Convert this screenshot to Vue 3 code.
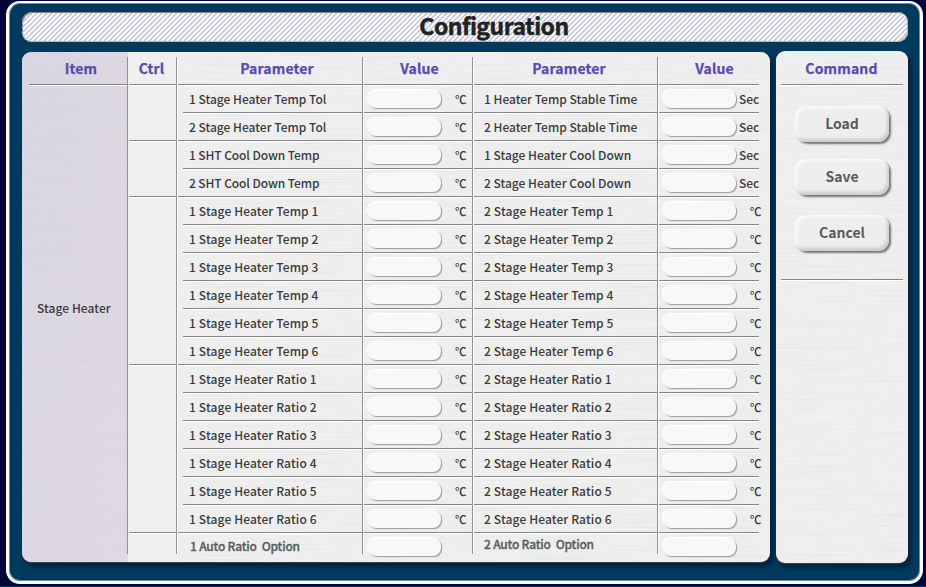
<script setup>
const leftNames = [
  '1 Stage Heater Temp Tol', '2 Stage Heater Temp Tol', '1 SHT Cool Down Temp', '2 SHT Cool Down Temp',
  ...[1, 2, 3, 4, 5, 6].map(n => `1 Stage Heater Temp ${n}`),
  ...[1, 2, 3, 4, 5, 6].map(n => `1 Stage Heater Ratio ${n}`),
]
const rightNames = [
  '1 Heater Temp Stable Time', '2 Heater Temp Stable Time', '1 Stage Heater Cool Down', '2 Stage Heater Cool Down',
  ...[1, 2, 3, 4, 5, 6].map(n => `2 Stage Heater Temp ${n}`),
  ...[1, 2, 3, 4, 5, 6].map(n => `2 Stage Heater Ratio ${n}`),
]
const groupEnds = [1, 3, 9, 15]
const groups = [2, 2, 6, 6]
const sides = [
  { key: 'left', names: leftNames, last: '1 Auto Ratio\u00a0 Option', units: leftNames.map(() => '℃') },
  { key: 'right', names: rightNames, last: '2 Auto Ratio\u00a0 Option', units: rightNames.map((_, i) => (i < 4 ? 'Sec' : '℃')) },
]
const commands = ['Load', 'Save', 'Cancel']
</script>

<template>
  <div class="screen">
    <div class="frame">
      <header class="title">
        <svg class="hatch" width="885" height="29">
          <defs>
            <pattern id="hatch" width="5" height="5" patternUnits="userSpaceOnUse">
              <path d="M-1 6L6 -1M-1 1L1 -1M4 6L6 4" stroke="#bdbbd3" stroke-width="1.25" />
            </pattern>
          </defs>
          <rect width="885" height="29" fill="url(#hatch)" />
        </svg>
        <h1>Configuration</h1>
      </header>
      <main class="body">
        <section class="panel table">
          <svg class="grain" width="748" height="510">
            <filter id="brushed" x="0" y="0" width="100%" height="100%">
              <feTurbulence type="fractalNoise" baseFrequency="0.012 0.6" numOctaves="2" seed="4" />
              <feColorMatrix values="0 0 0 0 0.6  0 0 0 0 0.6  0 0 0 0 0.62  1.6 0 0 0 -0.75" />
            </filter>
            <rect width="748" height="510" filter="url(#brushed)" />
          </svg>
          <div class="col item">
            <svg class="grain tint" width="106" height="510">
              <filter id="violet" x="0" y="0" width="100%" height="100%">
                <feTurbulence type="fractalNoise" baseFrequency="0.015 0.35" numOctaves="2" seed="9" />
                <feColorMatrix values="0 0 0 0 0.78  0 0 0 0 0.66  0 0 0 0 0.84  2.4 0 0 0 -0.95" />
              </filter>
              <rect width="106" height="510" filter="url(#violet)" />
            </svg>
            <div class="inner">
              <div class="head"><span>Item</span></div>
              <div class="stage"><span>Stage Heater</span></div>
            </div>
          </div>
          <div class="col ctrl">
            <div class="inner">
              <div class="head"><span>Ctrl</span></div>
              <div v-for="(g, i) in groups" :key="i" class="group" :class="'span' + g"></div>
            </div>
          </div>
          <template v-for="s in sides" :key="s.key">
            <div class="col param" :class="s.key">
              <div class="inner">
                <div class="head"><span>Parameter</span></div>
                <div v-for="(n, i) in s.names" :key="n" class="row" :class="{ wide: groupEnds.includes(i) }"><span class="name">{{ n }}</span></div>
                <div class="row last"><span class="name">{{ s.last }}</span></div>
              </div>
            </div>
            <div class="col value" :class="s.key">
              <div class="inner">
                <div class="head"><span>Value</span></div>
                <div v-for="(u, i) in s.units" :key="i" class="row">
                  <div class="field"></div><span class="unit" :class="{ sec: u === 'Sec' }">{{ u }}</span>
                </div>
                <div class="row last"><div class="field"></div></div>
              </div>
            </div>
          </template>
        </section>
        <aside class="panel command">
          <svg class="grain" width="132" height="512"><rect width="132" height="512" filter="url(#brushed)" /></svg>
          <div class="head"><span>Command</span></div>
          <div class="buttons">
            <button v-for="c in commands" :key="c" :class="c.toLowerCase()">{{ c }}</button>
          </div>
        </aside>
      </main>
    </div>
  </div>
</template>

<style>
body { background: #000438; overflow: hidden; }
</style>
<style scoped>
* { box-sizing: border-box; }
.screen {
  width: 926px; height: 587px; padding: 1px 3px 2px 6px;
  background: #000438; border-bottom: 1px solid #003a5c;
  font-family: "Noto Sans CJK SC", "Noto Sans", sans-serif; color: #3b3b3b;
}
.frame {
  height: 583px; width: 917px; border: 3px solid #fff; border-top-width: 2px; border-radius: 14px;
  background: #003a5c; box-shadow: inset 0 0 0 1px #6d8ea5, inset 0 0 3px #00233c;
  padding: 9px 12px 0 13px;
}
.title {
  position: relative; width: 886px; height: 30px; border-radius: 10px; background: #fff;
  box-shadow: inset 1px 1px 1px #777, inset -1px -1px 1px #aaa;
  display: flex; justify-content: center;
}
.hatch { position: absolute; left: 0; top: 1px; border-radius: 9px; }
h1 { position: relative; margin: -4px 0 0 58px; font-size: 23px; line-height: 34px; height: 34px; letter-spacing: -.55px; font-weight: 700; color: #222; -webkit-text-stroke: .5px #222; }
.body { display: flex; gap: 6px; margin-top: 9px; }
.panel { position: relative; background: #efefef; border-radius: 9px; box-shadow: 0 1px 1px #444, 3px 4px 5px #001e3a; overflow: hidden; }
.table { display: flex; width: 748px; height: 510px; margin-top: 1px; }
.grain { position: absolute; left: 0; top: 0; pointer-events: none; opacity: .3; }
.grain.tint { opacity: .4; }
.col { padding: 5px 0 8px; position: relative; }
.inner { position: relative; height: 497px; border-right: 1px solid #929292; box-shadow: 1px 0 #fff; }
.item { width: 106px; background: linear-gradient(100deg, rgba(198, 200, 212, .6), rgba(208, 196, 215, .5)); }
.ctrl { width: 49px; background: #efefef; }
.param { width: 186px; }
.param.right { width: 185px; }
.value { width: 110px; }
.value.right { width: 112px; }
.value.right .inner { border: 0; box-shadow: none; margin-right: 11px; }
.head {
  height: 28px; border-bottom: 1px solid #858585; box-shadow: 0 1px #fff; margin-left: 1px;
  text-align: center; font-size: 14px; line-height: 22px; letter-spacing: .15px; font-weight: 700; color: #584bb0;
  -webkit-text-stroke: .25px #584bb0;
}
.item .head { margin-left: 7px; padding-left: 6px; }
.ctrl .head { padding-right: 2px; }
.left.param .head { padding-left: 14px; }
.left.value .head { padding-left: 3px; }
.right.param .head { padding-left: 7px; }
.right.value .head { padding-left: 11px; }
.stage { padding-left: 15px; margin-top: 214px; font-size: 12px; line-height: 18px; font-weight: 500; letter-spacing: .06px; }
.group { margin-left: 1px; border-bottom: 1px solid #858585; box-shadow: 0 1px #fff; }
.span2 { height: 56px; }
.span6 { height: 168px; }
.row { height: 28px; border-bottom: 1px solid #858585; box-shadow: 0 1px #fff; display: flex; margin-left: 1px; font-size: 12px; line-height: 28px; font-weight: 500; white-space: nowrap; }
.name { letter-spacing: .13px; }
.row:nth-child(-n+5) .name { letter-spacing: 0; }
.left .row:nth-child(4) .name, .left .row:nth-child(5) .name { letter-spacing: -.1px; }
.left.param .row { margin-left: 6px; padding-left: 6px; }
.left.param .row.wide { margin-left: 1px; padding-left: 11px; }
.right.param .row { padding-left: 10px; }
.row.last { height: 21px; border: 0; box-shadow: none; color: #5c5c5c; line-height: 26px; }
.left.param .row.last { padding-left: 7px; }
.right.param .row.last { line-height: 22px; }
.row.last .name { letter-spacing: -.2px; -webkit-text-stroke: .3px #5c5c5c; }
.field { width: 73px; height: 18px; margin: 5px 0 0 4px; border-radius: 8px; background: #f8f8f8; box-shadow: 1px 1px 1px #999, -1px -1px 1px #fff; flex: none; }
.unit { margin-left: 14px; font-size: 11.5px; }
.right .unit { margin-left: 14px; }
.right .unit.sec { margin-left: 3px; font-size: 12px; }
.command { width: 132px; height: 512px; padding: 6px 5px 0; }
.command .head { margin: 0; padding-right: 1px; position: relative; }
.buttons { position: relative; height: 195px; border-bottom: 1px solid #858585; box-shadow: 0 1px #fff; padding: 21px 0 0 14px; }
button {
  display: block; width: 94px; height: 36px; padding: 0 0 1px; border: 0; border-radius: 11px; background: #eee;
  font: 700 14px/33px "Noto Sans CJK SC", sans-serif; color: #5a5a5a;
  box-shadow: 2px 2px 2px #777, inset 2px 2px 3px #fafafa, inset -2px -3px 3px #ccc;
}
.save { margin-top: 17px; }
.cancel { margin-top: 20px; }
</style>
